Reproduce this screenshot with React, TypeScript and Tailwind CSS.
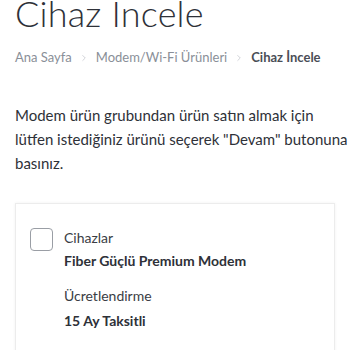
import { ChevronRight } from 'lucide-react';

export default function App() {
  return (
    <div className="w-[350px] h-[350px] overflow-hidden bg-white text-[#2e3138]" style={{ fontFamily: 'Lato, "Noto Sans", sans-serif' }}>
      <div className="px-[15px]">
        <h1 className="text-[36px] font-light leading-none -mt-[5px] tracking-[0.2px]">Cihaz Incele</h1>
        <nav className="flex items-center mt-[17px] text-[13px] text-[#8a8f98]">
          <span>Ana Sayfa</span>
          <ChevronRight size={10} strokeWidth={1.5} className="mx-[7px] text-[#b5b9c0]" />
          <span>Modem/Wi-Fi Ürünleri</span>
          <ChevronRight size={10} strokeWidth={1.5} className="mx-[7px] text-[#b5b9c0]" />
          <span className="font-bold text-[#4a4e56]">Cihaz İncele</span>
        </nav>
        <p className="mt-[35px] -mr-[15px] text-[15px] leading-[24px] text-[#2e3138]">
          Modem ürün grubundan ürün satın almak için lütfen istediğiniz ürünü seçerek "Devam" butonuna basınız.
        </p>
        <div className="mt-[28px] border border-[#ececec] shadow-[0_0_3px_rgba(0,0,0,0.06)] flex pl-[14px] pt-[24px] pb-[20px]">
          <div className="w-[23px] h-[23px] rounded-[4px] border border-[#9a9ea5] shrink-0" />
          <div className="ml-[11px] flex flex-col">
            <span className="text-[14px] leading-[20px] text-[#3a3d44]">Cihazlar</span>
            <span className="text-[14px] leading-[20px] font-bold mt-[3px] text-[#2e3138]">Fiber Güçlü Premium Modem</span>
            <span className="text-[14px] leading-[20px] mt-[15px] text-[#3a3d44]">Ücretlendirme</span>
            <span className="text-[14px] leading-[20px] font-bold mt-[5px] text-[#2e3138]">15 Ay Taksitli</span>
          </div>
        </div>
      </div>
    </div>
  );
}
